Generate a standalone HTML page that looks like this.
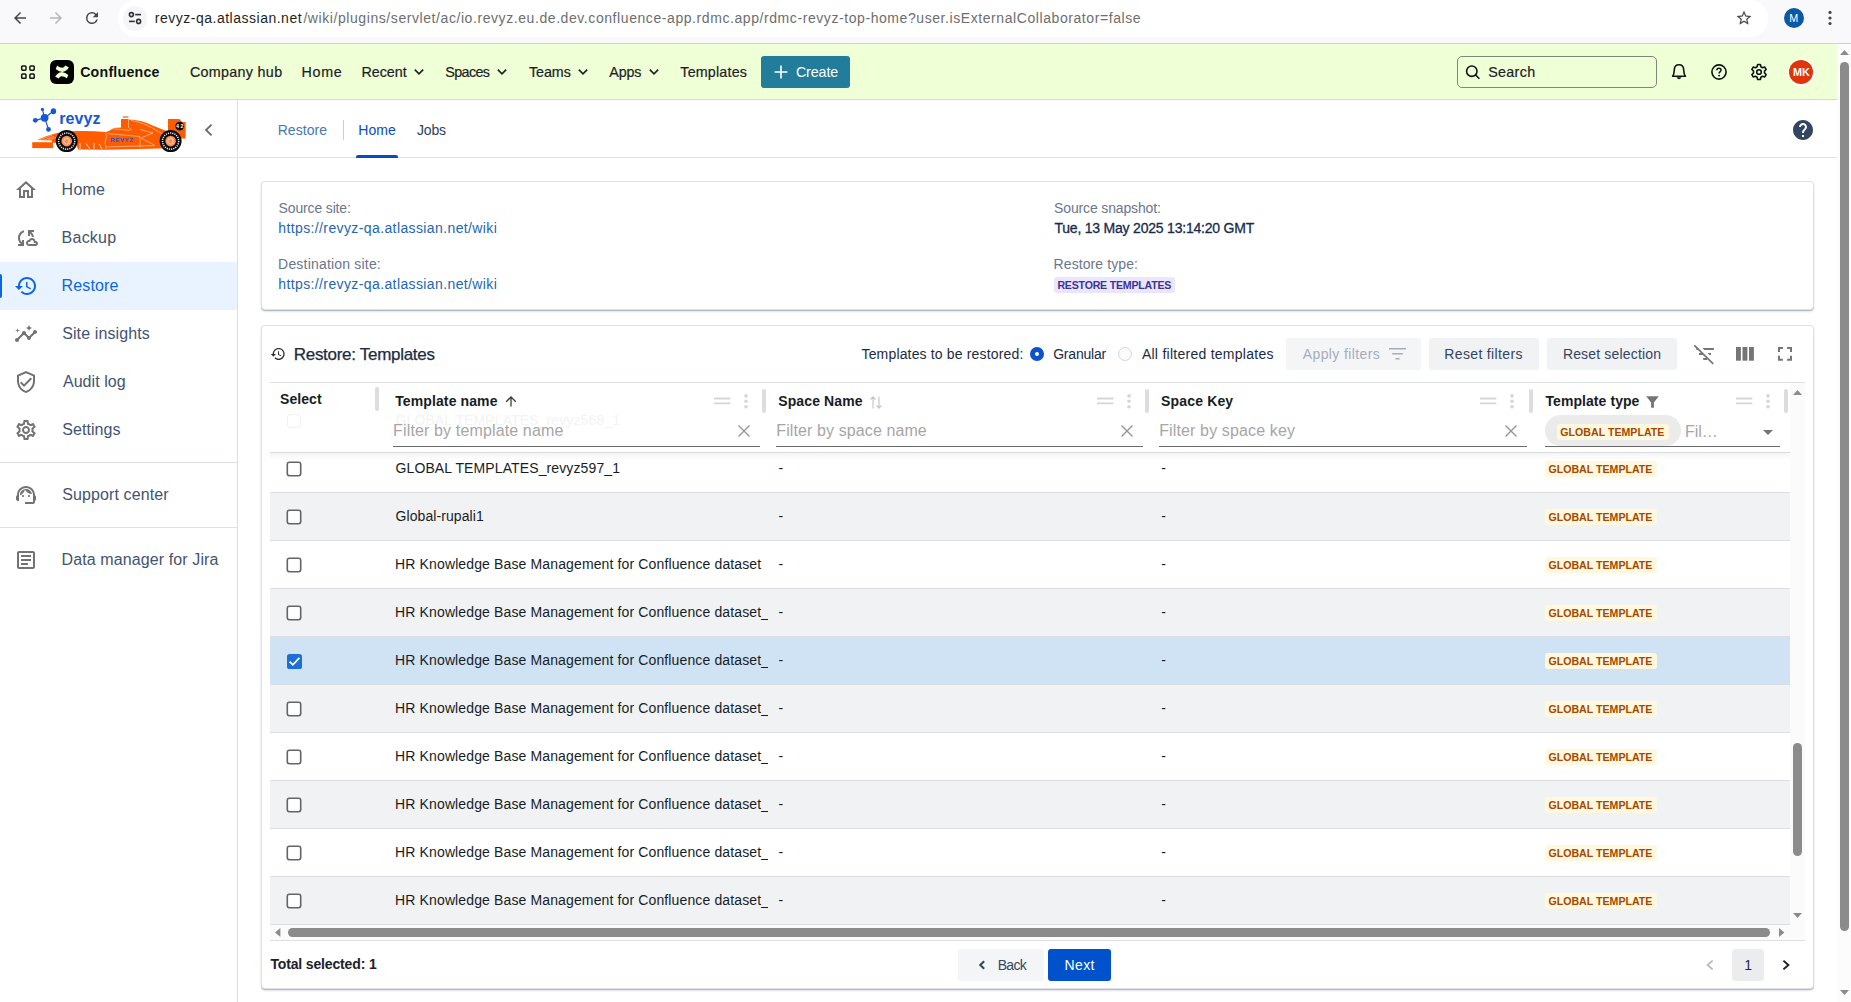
<!DOCTYPE html>
<html lang="en">
<head>
<meta charset="utf-8">
<title>Restore: Templates</title>
<style>
*{box-sizing:border-box;margin:0;padding:0}
html,body{width:1851px;height:1002px;overflow:hidden;background:#fff}
body{font-family:"Liberation Sans",sans-serif;color:#172b4d;position:relative}
.a{position:absolute}
.t{position:absolute;white-space:pre;line-height:1}
svg{position:absolute;overflow:visible}
.row{position:absolute;left:270px;width:1520px;height:48px;border-bottom:1px solid #dcdee2}
.alt{background:#f1f2f4}
.sel{background:#d0e3f5}
.cb{position:absolute;left:286.5px;width:15px;height:15px;border:1.6px solid #676767;border-radius:3px;background:#fff}
.lz{position:absolute;left:1545px;width:112px;height:16px;border-radius:3px;background:#fff8df}
.sep{position:absolute;width:4px;height:24px;top:389px;border-radius:2px;background:#dddddd}
.ul{position:absolute;top:446px;height:1px;background:#6b6b6b}
.btn{position:absolute;top:338px;height:32px;border-radius:3px;background:#f1f2f4}
</style>
</head>
<body>
<div class="a" style="left:0;top:0;width:1851px;height:43px;background:#f9f9fb"></div><div class="a" style="left:0;top:43px;width:1851px;height:1px;background:#cfd0d2"></div><div class="a" style="left:118px;top:0;width:1650px;height:36.5px;border-radius:18px;background:#fff"></div><div class="a" style="left:123px;top:6px;width:24px;height:25px;border-radius:12.5px;background:#f5f5f7"></div><svg style="left:11px;top:9.2px" width="18" height="18" viewBox="0 0 24 24"><path fill="#454746" d="M20 11H7.83l5.59-5.59L12 4l-8 8 8 8 1.41-1.41L7.83 13H20v-2z"/></svg><svg style="left:47px;top:9.2px" width="18" height="18" viewBox="0 0 24 24"><path fill="#b4b5b7" d="M12 4l-1.41 1.41L16.17 11H4v2h12.17l-5.58 5.59L12 20l8-8z"/></svg><svg style="left:83px;top:8.8px" width="18" height="18" viewBox="0 0 24 24"><path fill="#454746" d="M17.65 6.35A7.96 7.96 0 0 0 12 4a8 8 0 1 0 7.73 10h-2.08A6 6 0 1 1 12 6c1.66 0 3.14.69 4.22 1.78L13 11h7V4l-2.35 2.35z"/></svg><svg style="left:128px;top:11px" width="14" height="14" viewBox="0 0 14 14"><g fill="none" stroke="#303133" stroke-width="1.6"><circle cx="3.4" cy="3.6" r="2"/><path d="M7.2 3.6H13"/><circle cx="10.6" cy="10.4" r="2"/><path d="M1 10.4H6.8"/></g></svg><div class="t" style="left:154.79px;top:11px;font-size:14px;color:#1f1f1f;letter-spacing:0.506px;">revyz-qa.atlassian.net</div><div class="t" style="left:303.40px;top:11px;font-size:14px;color:#6d6e70;letter-spacing:0.575px;">/wiki/plugins/servlet/ac/io.revyz.eu.de.dev.confluence-app.rdmc.app/rdmc-revyz-top-home?user.isExternalCollaborator=false</div><svg style="left:1735px;top:9px" width="18" height="18" viewBox="0 0 24 24"><path fill="#454746" d="M22 9.24l-7.19-.62L12 2 9.19 8.63 2 9.24l5.46 4.73L5.82 21 12 17.27 18.18 21l-1.63-7.03L22 9.24zM12 15.4l-3.76 2.27 1-4.28-3.32-2.88 4.38-.38L12 6.1l1.71 4.04 4.38.38-3.32 2.88 1 4.28L12 15.4z"/></svg><div class="a" style="left:1783.8px;top:7.8px;width:20.2px;height:20.2px;border-radius:50%;background:#0b57a8"></div><div class="t" style="left:1789.34px;top:13px;font-size:10.8px;color:#fff;">M</div><svg style="left:1828px;top:10px" width="4" height="16" viewBox="0 0 4 16"><g fill="#454746"><circle cx="2" cy="2.4" r="1.6"/><circle cx="2" cy="8" r="1.6"/><circle cx="2" cy="13.5" r="1.6"/></g></svg><div class="a" style="left:0;top:44px;width:1837px;height:55px;background:#efffd6"></div><div class="a" style="left:0;top:99px;width:1837px;height:1px;background:#d3dcc8"></div><svg style="left:20px;top:64px" width="16" height="16" viewBox="0 0 16 16"><g fill="none" stroke="#101214" stroke-width="1.5"><rect x="1.7" y="1.9" width="4.3" height="4.3" rx="0.9"/><rect x="9.9" y="1.9" width="4.3" height="4.3" rx="0.9"/><rect x="1.7" y="10" width="4.3" height="4.3" rx="0.9"/><rect x="9.9" y="10" width="4.3" height="4.3" rx="0.9"/></g></svg><svg style="left:50px;top:60px" width="24" height="24" viewBox="0 0 24 24"><rect width="24" height="24" rx="6" fill="#000"/><path fill="#efffd6" d="M5.7 9.1L7.1 5.8Q10.2 7.9 12.7 7.7Q14.2 7.4 15.4 5.6L18.9 7.4Q16.6 11.2 12.1 12.0Q8.6 11.6 5.7 9.1Z"/><path fill="#efffd6" d="M18.3 14.9L16.9 18.2Q13.8 16.1 11.3 16.3Q9.8 16.6 8.6 18.4L5.1 16.6Q7.4 12.8 11.9 12.0Q15.4 12.4 18.3 14.9Z"/></svg><div class="t" style="left:80.13px;top:65px;font-size:14.2px;color:#101214;font-weight:700;letter-spacing:0.227px;">Confluence</div><div class="t" style="left:189.88px;top:65px;font-size:14.3px;color:#1d2125;letter-spacing:0.319px;-webkit-text-stroke:0.2px #1d2125;">Company hub</div><div class="t" style="left:301.46px;top:65px;font-size:14.3px;color:#1d2125;letter-spacing:0.704px;-webkit-text-stroke:0.2px #1d2125;">Home</div><div class="t" style="left:361.46px;top:65px;font-size:14.3px;color:#1d2125;letter-spacing:-0.029px;-webkit-text-stroke:0.2px #1d2125;">Recent</div><div class="t" style="left:445.26px;top:65px;font-size:14.3px;color:#1d2125;letter-spacing:-0.587px;-webkit-text-stroke:0.2px #1d2125;">Spaces</div><div class="t" style="left:528.91px;top:65px;font-size:14.3px;color:#1d2125;letter-spacing:-0.054px;-webkit-text-stroke:0.2px #1d2125;">Teams</div><div class="t" style="left:609.30px;top:65px;font-size:14.3px;color:#1d2125;letter-spacing:-0.167px;-webkit-text-stroke:0.2px #1d2125;">Apps</div><div class="t" style="left:680.31px;top:65px;font-size:14.3px;color:#1d2125;letter-spacing:0.185px;-webkit-text-stroke:0.2px #1d2125;">Templates</div><svg style="left:414.3px;top:68px" width="10" height="8" viewBox="0 0 10 8"><path d="M0.8 1.6L5 5.8L9.2 1.6" fill="none" stroke="#1d2125" stroke-width="1.6"/></svg><svg style="left:497.2px;top:68px" width="10" height="8" viewBox="0 0 10 8"><path d="M0.8 1.6L5 5.8L9.2 1.6" fill="none" stroke="#1d2125" stroke-width="1.6"/></svg><svg style="left:578.2px;top:68px" width="10" height="8" viewBox="0 0 10 8"><path d="M0.8 1.6L5 5.8L9.2 1.6" fill="none" stroke="#1d2125" stroke-width="1.6"/></svg><svg style="left:649px;top:68px" width="10" height="8" viewBox="0 0 10 8"><path d="M0.8 1.6L5 5.8L9.2 1.6" fill="none" stroke="#1d2125" stroke-width="1.6"/></svg><div class="a" style="left:761px;top:56px;width:89px;height:32px;border-radius:3px;background:#227d9b"></div><svg style="left:774px;top:65px" width="14" height="14" viewBox="0 0 14 14"><path d="M7 0.6V13.4M0.6 7H13.4" stroke="#fff" stroke-width="1.6" fill="none"/></svg><div class="t" style="left:795.88px;top:65px;font-size:14.3px;color:#fff;letter-spacing:-0.103px;">Create</div><div class="a" style="left:1457px;top:56px;width:200px;height:32px;border-radius:5px;border:1px solid #7f8877"></div><svg style="left:1464px;top:63px" width="18" height="18" viewBox="0 0 18 18"><g fill="none" stroke="#101214" stroke-width="1.6"><circle cx="7.8" cy="8.2" r="5.2"/><path d="M11.6 12L15.4 15.8"/></g></svg><div class="t" style="left:1488.16px;top:65px;font-size:14.3px;color:#1d2125;letter-spacing:0.328px;-webkit-text-stroke:0.2px #1d2125;">Search</div><svg style="left:1671px;top:63px" width="16" height="18" viewBox="0 0 16 18"><path d="M1.6 13.3C3.3 11.4 3.2 9.4 3.3 6.6C3.4 3.6 5.3 1.7 8 1.7C10.7 1.7 12.6 3.6 12.7 6.6C12.8 9.4 12.7 11.4 14.4 13.3Z" fill="none" stroke="#101214" stroke-width="1.6" stroke-linejoin="round"/><path d="M5.5 14.3Q8 18.2 10.5 14.3Z" fill="#101214"/></svg><svg style="left:1710px;top:63px" width="18" height="18" viewBox="0 0 18 18"><circle cx="9" cy="9" r="7.1" fill="none" stroke="#101214" stroke-width="1.6"/><path d="M6.9 7.3C6.9 5.9 7.9 5.2 9 5.2C10.2 5.2 11.1 6 11.1 7.1C11.1 8.6 9.1 8.7 9.1 10.4" fill="none" stroke="#101214" stroke-width="1.5"/><circle cx="9.1" cy="12.6" r="0.95" fill="#101214"/></svg><svg style="left:1750px;top:63px" width="18" height="18" viewBox="0 0 18 18"><path d="M7.65 1.52L10.35 1.52L10.90 3.73L12.61 4.72L14.80 4.09L16.15 6.43L14.51 8.01L14.51 9.99L16.15 11.57L14.80 13.91L12.61 13.28L10.90 14.27L10.35 16.48L7.65 16.48L7.10 14.27L5.39 13.28L3.20 13.91L1.85 11.57L3.49 9.99L3.49 8.01L1.85 6.43L3.20 4.09L5.39 4.72L7.10 3.73Z" fill="none" stroke="#101214" stroke-width="1.6" stroke-linejoin="round"/><circle cx="9" cy="9" r="2.3" fill="none" stroke="#101214" stroke-width="1.6"/></svg><div class="a" style="left:1787.5px;top:58.5px;width:27px;height:27px;border-radius:50%;background:#fff"></div><div class="a" style="left:1789px;top:60px;width:24px;height:24px;border-radius:50%;background:#de350b"></div><div class="t" style="left:1792.59px;top:67px;font-size:10.7px;color:#fff;font-weight:700;transform:scaleX(1.0143);transform-origin:0 0;">MK</div><div class="a" style="left:1837px;top:44px;width:14px;height:958px;background:#fcfcfc"></div><svg style="left:1840px;top:50px" width="9" height="5" viewBox="0 0 9 5"><path d="M0 5L4.5 0L9 5Z" fill="#8b8b8b"/></svg><div class="a" style="left:1840.3px;top:62px;width:8.7px;height:868.5px;border-radius:4.4px;background:#8b8b8b"></div><svg style="left:1840px;top:990px" width="9" height="5" viewBox="0 0 9 5"><path d="M0 0L4.5 5L9 0Z" fill="#8b8b8b"/></svg><div class="a" style="left:237px;top:100px;width:1px;height:902px;background:#dcdfe4"></div><div class="a" style="left:0;top:157px;width:1837px;height:1px;background:#e1e3e8"></div><svg style="left:28px;top:104px" width="164" height="52" viewBox="28 104 164 52">
<g stroke="#1558d6" stroke-width="1.2"><path d="M44.6 117.8L53.4 111.3M44.6 117.8L42.4 109.4M44.6 117.8L35.3 120.3M44.6 117.8L48.5 129.4"/></g>
<g fill="#1558d6"><circle cx="44.6" cy="117.8" r="3.9"/><ellipse cx="53.4" cy="111.3" rx="2.7" ry="3"/><circle cx="42.4" cy="109.4" r="1.6"/><circle cx="35.3" cy="120.3" r="2.4"/><circle cx="48.5" cy="129.4" r="2.4"/></g>
<g fill="#ff5c00">
<rect x="32.2" y="142.2" width="20.8" height="5.9"/>
<path d="M37.3 140L46 136.2Q57 132.2 68 131.3Q88 130.2 105.8 132L109 131L113.6 128.1L121 127.5V119H128.3V119.6Q141 119.8 152 125.3L163.8 130L168 131.5V119H179.4L182 121.9H185.6V138.5H180L178 146.5L160 148.6L106 149.7L78 149.5L76 142.8H52V140.5Z"/>
<rect x="122.8" y="116.2" width="5.7" height="1.7" fill="#ff8a4a"/>
</g>
<g fill="none" stroke="#ffe3d3" stroke-width="0.55"><path d="M105.5 132.5L106.5 137L105 142L106 149"/><path d="M128.5 119.8V127.5L132 130"/><path d="M131 120.5Q146 123 158 131.5L164 134.5"/><path d="M107 133.5L140 136.5V147.5"/><path d="M140 129.5L153 133L141 138L155 145.5L106 147"/><path d="M112 128.6L130 130.5"/><path d="M38 140.5L52 135M41 141L54 136.5M45 141.2L56 137.3" stroke-width="0.45"/><path d="M80 143V149M86 143.5L90 149M94 143V149M99 144L102 149" stroke="#fff" stroke-width="0.7"/></g>
<g><circle cx="66.7" cy="141.1" r="11" fill="#0b0b0b"/><circle cx="66.7" cy="141.1" r="8.1" fill="none" stroke="#ededed" stroke-width="1.5" stroke-dasharray="1.2 1"/><circle cx="66.7" cy="141.1" r="5.3" fill="#ff8d52"/><circle cx="66.7" cy="141.1" r="2.8" fill="none" stroke="#ffe1d0" stroke-width="1.6" stroke-dasharray="0.9 0.8"/></g>
<g><circle cx="170.6" cy="141.1" r="11" fill="#0b0b0b"/><circle cx="170.6" cy="141.1" r="8.1" fill="none" stroke="#ededed" stroke-width="1.5" stroke-dasharray="1.2 1"/><circle cx="170.6" cy="141.1" r="5.3" fill="#ff8d52"/><circle cx="170.6" cy="141.1" r="2.8" fill="none" stroke="#ffe1d0" stroke-width="1.6" stroke-dasharray="0.9 0.8"/></g>
<circle cx="179.7" cy="126.1" r="4.4" fill="#0b0b0b"/>
</svg><div class="t" style="left:59.26px;top:111px;font-size:16px;color:#1558d6;font-weight:700;letter-spacing:0.060px;">revyz</div><div class="t" style="left:110.30px;top:137px;font-size:6.2px;color:#1a56c9;font-weight:700;letter-spacing:0.503px;">REVYZ</div><div class="t" style="left:176.02px;top:124px;font-size:5.4px;color:#fff;font-weight:700;letter-spacing:1.583px;">42</div><svg style="left:204px;top:123px" width="9" height="14" viewBox="0 0 9 14"><path d="M7.6 1.6L2 7L7.6 12.4" fill="none" stroke="#6b6e76" stroke-width="1.9"/></svg><div class="t" style="left:277.68px;top:123px;font-size:14px;color:#4679b6;letter-spacing:0.045px;">Restore</div><div class="a" style="left:343px;top:120px;width:1px;height:20px;background:#c9ced6"></div><div class="t" style="left:358.18px;top:123px;font-size:14px;color:#0b4bc0;letter-spacing:0.119px;">Home</div><div class="a" style="left:356px;top:155px;width:42px;height:3px;border-radius:2px 2px 0 0;background:#0a4bc4"></div><div class="t" style="left:416.99px;top:123px;font-size:14px;color:#2c3e5d;letter-spacing:-0.148px;">Jobs</div><svg style="left:1791px;top:118px" width="24" height="24" viewBox="0 0 24 24"><path fill="#344563" d="M12 2C6.48 2 2 6.48 2 12s4.48 10 10 10 10-4.48 10-10S17.52 2 12 2zm1 17h-2v-2h2v2zm2.07-7.75l-.9.92C13.45 12.9 13 13.5 13 15h-2v-.5c0-1.1.45-2.1 1.17-2.83l1.24-1.26c.37-.36.59-.86.59-1.41 0-1.1-.9-2-2-2s-2 .9-2 2H8c0-2.21 1.79-4 4-4s4 1.79 4 4c0 .88-.36 1.68-.93 2.25z"/></svg><div class="a" style="left:0;top:262px;width:237px;height:48px;background:#e9f2ff"></div><div class="a" style="left:0;top:274px;width:2px;height:24px;border-radius:0 2px 2px 0;background:#0c66e4"></div><div class="t" style="left:61.62px;top:182px;font-size:16px;color:#44546f;letter-spacing:0.225px;">Home</div><div class="t" style="left:61.62px;top:230px;font-size:16px;color:#44546f;letter-spacing:0.231px;">Backup</div><div class="t" style="left:61.62px;top:278px;font-size:16px;color:#0c66e4;letter-spacing:0.136px;">Restore</div><div class="t" style="left:62.18px;top:326px;font-size:16px;color:#44546f;letter-spacing:0.112px;">Site insights</div><div class="t" style="left:62.90px;top:374px;font-size:16px;color:#44546f;letter-spacing:0.065px;">Audit log</div><div class="t" style="left:62.18px;top:422px;font-size:16px;color:#44546f;letter-spacing:0.077px;">Settings</div><div class="t" style="left:62.18px;top:487px;font-size:16px;color:#44546f;letter-spacing:0.116px;">Support center</div><div class="t" style="left:61.62px;top:552px;font-size:16px;color:#44546f;letter-spacing:0.104px;">Data manager for Jira</div><div class="a" style="left:0;top:462px;width:237px;height:1px;background:#dcdfe4"></div><div class="a" style="left:0;top:527px;width:237px;height:1px;background:#dcdfe4"></div><svg style="left:14px;top:178px" width="24" height="24" viewBox="0 0 24 24"><path fill="#727272" d="M12 5.69l5 4.5V18h-2v-6H9v6H7v-7.81l5-4.5M12 3L2 12h3v8h6v-6h2v6h6v-8h3L12 3z"/></svg><svg style="left:14px;top:226px" width="24" height="24" viewBox="0 0 24 24"><path fill="#727272" d="M21.5 14.98c-.02 0-.03 0-.05.01C21.2 13.3 19.76 12 18 12c-1.4 0-2.6.83-3.16 2.02C13.26 14.1 12 15.4 12 17c0 1.66 1.34 3 3 3l6.5-.02c1.38 0 2.5-1.12 2.5-2.5s-1.12-2.500-2.5-2.500zM21.51 17.98L15 18c-.55 0-1-.45-1-1s.45-1 1-1h1.250v-.25c0-.97.78-1.75 1.750-1.750s1.750.78 1.750 1.750V17h1.760c.28 0 .5.22.5.5 0 .27-.22.48-.49.48zM10 4.260v2.090C7.670 7.180 6 9.390 6 12c0 1.770.78 3.340 2 4.440V14h2v6H4v-2h2.730C5.060 16.540 4 14.400 4 12c0-3.730 2.550-6.850 6-7.740zM20 6h-2.730c1.430 1.260 2.410 3.010 2.660 5h-2.020c-.23-1.360-.93-2.550-1.910-3.440V10h-2V4h6v2z"/></svg><svg style="left:14px;top:274px" width="24" height="24" viewBox="0 0 24 24"><path fill="#0c66e4" d="M13 3c-4.97 0-9 4.03-9 9H1l3.890 3.890.07.14L9 12H6c0-3.870 3.130-7 7-7s7 3.130 7 7-3.130 7-7 7c-1.930 0-3.680-.79-4.940-2.060l-1.420 1.420C8.270 19.990 10.510 21 13 21c4.970 0 9-4.030 9-9s-4.030-9-9-9zm-1 5v5l4.280 2.540.72-1.210-3.500-2.080V8H12z"/></svg><svg style="left:14px;top:322px" width="24" height="24" viewBox="0 0 24 24"><path fill="#727272" d="M21 8c-1.450 0-2.260 1.440-1.930 2.510l-3.550 3.560c-.3-.09-.74-.09-1.040 0l-2.550-2.550C12.270 10.450 11.460 9 10 9c-1.450 0-2.270 1.440-1.930 2.520l-4.560 4.550C2.440 15.740 1 16.550 1 18c0 1.100.9 2 2 2 1.450 0 2.260-1.440 1.930-2.510l4.550-4.560c.3.09.74.09 1.040 0l2.550 2.550C12.730 16.550 13.540 18 15 18c1.450 0 2.270-1.440 1.930-2.520l3.560-3.550c1.070.33 2.510-.48 2.510-1.930 0-1.100-.9-2-2-2zM15 9l.94-2.070L18 6l-2.060-.93L15 3l-.92 2.070L12 6l2.080.93zM3.500 11L4 9l2-.5L4 8l-.5-2L3 8l-2 .5L3 9z"/></svg><svg style="left:14px;top:370px" width="24" height="24" viewBox="0 0 24 24"><path fill="#727272" d="M12 1L3 5v6c0 5.550 3.840 10.740 9 12 5.160-1.260 9-6.450 9-12V5l-9-4zm7 10c0 4.520-2.980 8.690-7 9.930-4.020-1.240-7-5.410-7-9.930V6.300l7-3.110 7 3.110V11zm-11.590.59L6 13l4 4 8-8-1.410-1.420L10 14.170z"/></svg><svg style="left:14px;top:418px" width="24" height="24" viewBox="0 0 24 24"><path fill="#727272" d="M19.430 12.980c.04-.32.07-.64.07-.98 0-.34-.03-.66-.07-.98l2.110-1.650c.19-.15.24-.42.12-.64l-2-3.460c-.09-.16-.26-.25-.44-.25-.06 0-.12.010-.17.030l-2.490 1c-.52-.4-1.080-.73-1.690-.98l-.38-2.650C14.460 2.180 14.250 2 14 2h-4c-.25 0-.46.180-.49.420l-.38 2.650c-.61.250-1.170.59-1.690.98l-2.490-1c-.06-.02-.12-.03-.18-.03-.17 0-.34.09-.43.250l-2 3.460c-.13.220-.07.49.12.640l2.110 1.650c-.04.320-.07.650-.07.980 0 .33.030.66.070.98l-2.110 1.650c-.19.150-.24.420-.12.640l2 3.460c.09.160.26.250.44.250.06 0 .12-.01.17-.03l2.490-1c.52.4 1.080.73 1.690.98l.38 2.650c.03.240.24.420.49.420h4c.25 0 .46-.18.490-.42l.38-2.650c.61-.25 1.170-.59 1.690-.98l2.490 1c.06.020.12.030.18.030.17 0 .34-.09.43-.25l2-3.460c.12-.22.070-.49-.12-.64l-2.110-1.650zm-1.980-1.710c.04.310.05.520.05.730 0 .210-.02.430-.05.730l-.14 1.130.89.700 1.080.84-.7 1.210-1.270-.51-1.040-.42-.9.680c-.43.320-.84.560-1.250.73l-1.060.43-.16 1.130-.2 1.350h-1.400l-.19-1.350-.16-1.130-1.060-.43c-.43-.18-.83-.41-1.230-.71l-.91-.7-1.060.43-1.270.51-.7-1.210 1.080-.84.89-.7-.14-1.130c-.03-.31-.05-.54-.05-.74s.02-.43.050-.73l.14-1.130-.89-.7-1.080-.84.7-1.210 1.270.51 1.040.42.900-.68c.43-.32.840-.56 1.250-.73l1.060-.43.160-1.130.2-1.350h1.390l.19 1.350.16 1.130 1.060.43c.43.180.83.410 1.230.710l.91.700 1.060-.43 1.270-.51.7 1.210-1.070.85-.89.700.14 1.130zM12 8c-2.210 0-4 1.790-4 4s1.790 4 4 4 4-1.790 4-4-1.790-4-4-4zm0 6c-1.100 0-2-.9-2-2s.9-2 2-2 2 .9 2 2-.9 2-2 2z"/></svg><svg style="left:14px;top:483px" width="24" height="24" viewBox="0 0 24 24"><path fill="#727272" d="M21 12.220C21 6.730 16.740 3 12 3c-4.690 0-9 3.650-9 9.280-.6.340-1 .98-1 1.720v2c0 1.100.9 2 2 2h1v-6.100c0-3.870 3.130-7 7-7s7 3.130 7 7V19h-8v2h8c1.100 0 2-.9 2-2v-1.220c.59-.31 1-.92 1-1.640v-2.300c0-.7-.41-1.310-1-1.620zM9 14c.55 0 1-.45 1-1s-.45-1-1-1-1 .45-1 1 .45 1 1 1zM15 14c.55 0 1-.45 1-1s-.45-1-1-1-1 .45-1 1 .45 1 1 1zM18 11.030C17.520 8.180 15.040 6 12.050 6c-3.030 0-6.290 2.510-6.030 6.450 2.470-1.010 4.330-3.210 4.860-5.890 1.310 2.630 4 4.440 7.120 4.470z"/></svg><svg style="left:14px;top:548px" width="24" height="24" viewBox="0 0 24 24"><path fill="#727272" d="M19 5v14H5V5h14m0-2H5c-1.100 0-2 .9-2 2v14c0 1.100.9 2 2 2h14c1.100 0 2-.9 2-2V5c0-1.100-.9-2-2-2zM14 17H7v-2h7v2zm3-4H7v-2h10v2zm0-4H7V7h10v2z"/></svg><div class="a" style="left:261px;top:181px;width:1553px;height:129px;background:#fff;border:1px solid #dfe1e6;border-radius:4px;box-shadow:0 1px 1px rgba(9,30,66,.22),0 2px 3px -1px rgba(9,30,66,.2)"></div><div class="t" style="left:278.57px;top:201px;font-size:14px;color:#6b778c;letter-spacing:-0.147px;">Source site:</div><div class="t" style="left:278.22px;top:221px;font-size:14px;color:#2466b4;letter-spacing:0.389px;">https://revyz-qa.atlassian.net/wiki</div><div class="t" style="left:278.08px;top:257px;font-size:14px;color:#6b778c;letter-spacing:0.192px;">Destination site:</div><div class="t" style="left:278.22px;top:277px;font-size:14px;color:#2466b4;letter-spacing:0.389px;">https://revyz-qa.atlassian.net/wiki</div><div class="t" style="left:1054.07px;top:201px;font-size:14px;color:#6b778c;letter-spacing:-0.141px;">Source snapshot:</div><div class="t" style="left:1054.42px;top:221px;font-size:14px;color:#172b4d;letter-spacing:-0.210px;-webkit-text-stroke:0.3px #172b4d;">Tue, 13 May 2025 13:14:20 GMT</div><div class="t" style="left:1053.58px;top:257px;font-size:14px;color:#6b778c;letter-spacing:0.090px;">Restore type:</div><div class="a" style="left:1054px;top:277px;width:121px;height:16px;border-radius:3px;background:#eae6ff"></div><div class="t" style="left:1057.41px;top:280px;font-size:10.6px;color:#403294;font-weight:700;letter-spacing:-0.210px;">RESTORE TEMPLATES</div><div class="a" style="left:261px;top:325px;width:1553px;height:664px;background:#fff;border:1px solid #dfe1e6;border-radius:4px;box-shadow:0 1px 1px rgba(9,30,66,.22),0 2px 3px -1px rgba(9,30,66,.2)"></div><svg style="left:270px;top:346px" width="16" height="16" viewBox="0 0 24 24"><path fill="#2b2f36" d="M13 3c-4.97 0-9 4.03-9 9H1l3.890 3.890.07.14L9 12H6c0-3.870 3.130-7 7-7s7 3.130 7 7-3.130 7-7 7c-1.930 0-3.680-.79-4.940-2.060l-1.420 1.420C8.270 19.990 10.510 21 13 21c4.970 0 9-4.030 9-9s-4.030-9-9-9zm-1 5v5l4.280 2.540.72-1.210-3.500-2.080V8H12z"/></svg><div class="t" style="left:293.74px;top:346px;font-size:17px;color:#1c2b41;letter-spacing:-0.292px;-webkit-text-stroke:0.25px #1c2b41;">Restore: Templates</div><div class="t" style="left:861.52px;top:347px;font-size:14px;color:#1c2b41;letter-spacing:0.160px;">Templates to be restored:</div><div class="a" style="left:1030px;top:347px;width:14px;height:14px;border-radius:50%;background:#0c52cc"></div><div class="a" style="left:1035px;top:352px;width:4px;height:4px;border-radius:50%;background:#fff"></div><div class="t" style="left:1053.20px;top:347px;font-size:14px;color:#1c2b41;letter-spacing:-0.203px;">Granular</div><div class="a" style="left:1118px;top:347px;width:14px;height:14px;border-radius:50%;background:#fafbfc;border:1.5px solid #d3d6dc"></div><div class="t" style="left:1141.90px;top:347px;font-size:14px;color:#1c2b41;letter-spacing:0.263px;">All filtered templates</div><div class="btn" style="left:1286px;width:135px;background:#f4f5f7"></div><div class="t" style="left:1302.80px;top:347px;font-size:14px;color:#a5adba;letter-spacing:0.384px;">Apply filters</div><svg style="left:1389px;top:348px" width="17" height="12" viewBox="0 0 17 12"><path d="M0 0.8H17M3.2 5.8H13.8M6.5 10.8H10.5" stroke="#a5adba" stroke-width="1.4" fill="none"/></svg><div class="btn" style="left:1429px;width:110px"></div><div class="t" style="left:1444.28px;top:347px;font-size:14px;color:#344563;letter-spacing:0.357px;">Reset filters</div><div class="btn" style="left:1547px;width:130px"></div><div class="t" style="left:1562.88px;top:347px;font-size:14px;color:#344563;letter-spacing:0.169px;">Reset selection</div><svg style="left:1693px;top:344px" width="23" height="21" viewBox="1693 344 23 21"><g fill="none" stroke="#757575" stroke-width="2"><path d="M1696.3 348.9H1713.9M1699 353.9H1711M1703.2 358.9H1707"/></g><path d="M1695.6 344.2L1714.4 362.7" stroke="#fff" stroke-width="4.2" fill="none"/><path d="M1694.4 345.4L1713.2 363.9" stroke="#757575" stroke-width="1.7" fill="none"/></svg><svg style="left:1736.1px;top:347.1px" width="18" height="13.7" viewBox="0 0 18 13.7"><g fill="#757575"><rect x="0" y="0" width="4.9" height="13.7"/><rect x="6.5" y="0" width="4.9" height="13.7"/><rect x="13" y="0" width="4.9" height="13.7"/></g></svg><svg style="left:1778px;top:347.1px" width="14" height="13.7" viewBox="0 0 14 13.7"><path d="M1 4.9V1H4.9M9.1 1H13V4.9M13 8.8V12.7H9.1M4.9 12.7H1V8.8" fill="none" stroke="#757575" stroke-width="2"/></svg><div class="a" style="left:270px;top:383px;width:1520px;height:542px;overflow:hidden"></div><div class="row" style="top:445px"></div><svg style="left:286px;top:461px" width="16" height="16" viewBox="0 0 16 16"><rect x="1.3" y="1.3" width="13.4" height="13.4" rx="2.1" fill="#fff" stroke="#646464" stroke-width="1.6"/></svg><div class="t" style="left:395.50px;top:461px;font-size:14px;color:#181d1f;letter-spacing:0.114px;">GLOBAL TEMPLATES_revyz597_1</div><div class="t" style="left:778.47px;top:461px;font-size:14px;color:#181d1f;">-</div><div class="t" style="left:1161.37px;top:461px;font-size:14px;color:#181d1f;">-</div><div class="lz" style="top:461px"></div><div class="t" style="left:1548.48px;top:464px;font-size:10.6px;color:#a54800;font-weight:700;letter-spacing:0.009px;">GLOBAL TEMPLATE</div><div class="row alt" style="top:493px"></div><svg style="left:286px;top:509px" width="16" height="16" viewBox="0 0 16 16"><rect x="1.3" y="1.3" width="13.4" height="13.4" rx="2.1" fill="#fff" stroke="#646464" stroke-width="1.6"/></svg><div class="t" style="left:395.50px;top:509px;font-size:14px;color:#181d1f;letter-spacing:0.082px;">Global-rupali1</div><div class="t" style="left:778.47px;top:509px;font-size:14px;color:#181d1f;">-</div><div class="t" style="left:1161.37px;top:509px;font-size:14px;color:#181d1f;">-</div><div class="lz" style="top:509px"></div><div class="t" style="left:1548.48px;top:512px;font-size:10.6px;color:#a54800;font-weight:700;letter-spacing:0.009px;">GLOBAL TEMPLATE</div><div class="row" style="top:541px"></div><svg style="left:286px;top:557px" width="16" height="16" viewBox="0 0 16 16"><rect x="1.3" y="1.3" width="13.4" height="13.4" rx="2.1" fill="#fff" stroke="#646464" stroke-width="1.6"/></svg><div class="t" style="left:395.08px;top:557px;font-size:14px;color:#181d1f;letter-spacing:0.131px;">HR Knowledge Base Management for Confluence dataset</div><div class="t" style="left:778.47px;top:557px;font-size:14px;color:#181d1f;">-</div><div class="t" style="left:1161.37px;top:557px;font-size:14px;color:#181d1f;">-</div><div class="lz" style="top:557px"></div><div class="t" style="left:1548.48px;top:560px;font-size:10.6px;color:#a54800;font-weight:700;letter-spacing:0.009px;">GLOBAL TEMPLATE</div><div class="row alt" style="top:589px"></div><svg style="left:286px;top:605px" width="16" height="16" viewBox="0 0 16 16"><rect x="1.3" y="1.3" width="13.4" height="13.4" rx="2.1" fill="#fff" stroke="#646464" stroke-width="1.6"/></svg><div class="t" style="left:395.08px;top:605px;font-size:14px;color:#181d1f;letter-spacing:0.130px;width:372.9px;overflow:hidden;padding-bottom:4px;">HR Knowledge Base Management for Confluence dataset_1</div><div class="t" style="left:778.47px;top:605px;font-size:14px;color:#181d1f;">-</div><div class="t" style="left:1161.37px;top:605px;font-size:14px;color:#181d1f;">-</div><div class="lz" style="top:605px"></div><div class="t" style="left:1548.48px;top:608px;font-size:10.6px;color:#a54800;font-weight:700;letter-spacing:0.009px;">GLOBAL TEMPLATE</div><div class="row sel" style="top:637px"></div><svg style="left:286.5px;top:653.5px" width="15" height="15" viewBox="0 0 15 15"><rect width="15" height="15" rx="2.6" fill="#1b6fd6"/><path d="M2.6 7.6L5.9 10.9L12.4 3.9" fill="none" stroke="#fff" stroke-width="1.7"/></svg><div class="t" style="left:395.08px;top:653px;font-size:14px;color:#181d1f;letter-spacing:0.130px;width:372.9px;overflow:hidden;padding-bottom:4px;">HR Knowledge Base Management for Confluence dataset_1</div><div class="t" style="left:778.47px;top:653px;font-size:14px;color:#181d1f;">-</div><div class="t" style="left:1161.37px;top:653px;font-size:14px;color:#181d1f;">-</div><div class="lz" style="top:653px"></div><div class="t" style="left:1548.48px;top:656px;font-size:10.6px;color:#a54800;font-weight:700;letter-spacing:0.009px;">GLOBAL TEMPLATE</div><div class="row alt" style="top:685px"></div><svg style="left:286px;top:701px" width="16" height="16" viewBox="0 0 16 16"><rect x="1.3" y="1.3" width="13.4" height="13.4" rx="2.1" fill="#fff" stroke="#646464" stroke-width="1.6"/></svg><div class="t" style="left:395.08px;top:701px;font-size:14px;color:#181d1f;letter-spacing:0.130px;width:372.9px;overflow:hidden;padding-bottom:4px;">HR Knowledge Base Management for Confluence dataset_1</div><div class="t" style="left:778.47px;top:701px;font-size:14px;color:#181d1f;">-</div><div class="t" style="left:1161.37px;top:701px;font-size:14px;color:#181d1f;">-</div><div class="lz" style="top:701px"></div><div class="t" style="left:1548.48px;top:704px;font-size:10.6px;color:#a54800;font-weight:700;letter-spacing:0.009px;">GLOBAL TEMPLATE</div><div class="row" style="top:733px"></div><svg style="left:286px;top:749px" width="16" height="16" viewBox="0 0 16 16"><rect x="1.3" y="1.3" width="13.4" height="13.4" rx="2.1" fill="#fff" stroke="#646464" stroke-width="1.6"/></svg><div class="t" style="left:395.08px;top:749px;font-size:14px;color:#181d1f;letter-spacing:0.130px;width:372.9px;overflow:hidden;padding-bottom:4px;">HR Knowledge Base Management for Confluence dataset_1</div><div class="t" style="left:778.47px;top:749px;font-size:14px;color:#181d1f;">-</div><div class="t" style="left:1161.37px;top:749px;font-size:14px;color:#181d1f;">-</div><div class="lz" style="top:749px"></div><div class="t" style="left:1548.48px;top:752px;font-size:10.6px;color:#a54800;font-weight:700;letter-spacing:0.009px;">GLOBAL TEMPLATE</div><div class="row alt" style="top:781px"></div><svg style="left:286px;top:797px" width="16" height="16" viewBox="0 0 16 16"><rect x="1.3" y="1.3" width="13.4" height="13.4" rx="2.1" fill="#fff" stroke="#646464" stroke-width="1.6"/></svg><div class="t" style="left:395.08px;top:797px;font-size:14px;color:#181d1f;letter-spacing:0.130px;width:372.9px;overflow:hidden;padding-bottom:4px;">HR Knowledge Base Management for Confluence dataset_1</div><div class="t" style="left:778.47px;top:797px;font-size:14px;color:#181d1f;">-</div><div class="t" style="left:1161.37px;top:797px;font-size:14px;color:#181d1f;">-</div><div class="lz" style="top:797px"></div><div class="t" style="left:1548.48px;top:800px;font-size:10.6px;color:#a54800;font-weight:700;letter-spacing:0.009px;">GLOBAL TEMPLATE</div><div class="row" style="top:829px"></div><svg style="left:286px;top:845px" width="16" height="16" viewBox="0 0 16 16"><rect x="1.3" y="1.3" width="13.4" height="13.4" rx="2.1" fill="#fff" stroke="#646464" stroke-width="1.6"/></svg><div class="t" style="left:395.08px;top:845px;font-size:14px;color:#181d1f;letter-spacing:0.130px;width:372.9px;overflow:hidden;padding-bottom:4px;">HR Knowledge Base Management for Confluence dataset_1</div><div class="t" style="left:778.47px;top:845px;font-size:14px;color:#181d1f;">-</div><div class="t" style="left:1161.37px;top:845px;font-size:14px;color:#181d1f;">-</div><div class="lz" style="top:845px"></div><div class="t" style="left:1548.48px;top:848px;font-size:10.6px;color:#a54800;font-weight:700;letter-spacing:0.009px;">GLOBAL TEMPLATE</div><div class="row alt" style="top:877px"></div><svg style="left:286px;top:893px" width="16" height="16" viewBox="0 0 16 16"><rect x="1.3" y="1.3" width="13.4" height="13.4" rx="2.1" fill="#fff" stroke="#646464" stroke-width="1.6"/></svg><div class="t" style="left:395.08px;top:893px;font-size:14px;color:#181d1f;letter-spacing:0.130px;width:372.9px;overflow:hidden;padding-bottom:4px;">HR Knowledge Base Management for Confluence dataset_1</div><div class="t" style="left:778.47px;top:893px;font-size:14px;color:#181d1f;">-</div><div class="t" style="left:1161.37px;top:893px;font-size:14px;color:#181d1f;">-</div><div class="lz" style="top:893px"></div><div class="t" style="left:1548.48px;top:896px;font-size:10.6px;color:#a54800;font-weight:700;letter-spacing:0.009px;">GLOBAL TEMPLATE</div><div class="a" style="left:270px;top:382px;width:1535px;height:1px;background:#dde0e5"></div><div class="a" style="left:270px;top:383px;width:1520px;height:69px;background:#fff"></div><div class="a" style="left:270px;top:452px;width:1520px;height:1px;background:#d9dbde"></div><div class="a" style="left:270px;top:453px;width:1520px;height:7px;background:linear-gradient(rgba(0,0,0,.045),rgba(0,0,0,0))"></div><div class="a" style="left:287px;top:414px;width:14px;height:14px;border:1.5px solid #f1f1f1;border-radius:3px"></div><div class="t" style="left:395.50px;top:413px;font-size:14px;color:#f3f3f3;letter-spacing:0.114px;">GLOBAL TEMPLATES_revyz568_1</div><div class="t" style="left:279.98px;top:392px;font-size:14px;color:#181d1f;font-weight:700;letter-spacing:0.086px;">Select</div><div class="t" style="left:395.26px;top:394px;font-size:14px;color:#181d1f;font-weight:700;letter-spacing:0.107px;">Template name</div><div class="t" style="left:778.18px;top:394px;font-size:14px;color:#181d1f;font-weight:700;letter-spacing:0.133px;">Space Name</div><div class="t" style="left:1161.08px;top:394px;font-size:14px;color:#181d1f;font-weight:700;letter-spacing:0.156px;">Space Key</div><div class="t" style="left:1545.46px;top:394px;font-size:14px;color:#181d1f;font-weight:700;letter-spacing:0.071px;">Template type</div><div class="sep" style="left:375.3px;top:387px"></div><div class="sep" style="left:762.2px"></div><div class="sep" style="left:1145.2px"></div><div class="sep" style="left:1529.1px"></div><div class="sep" style="left:1784px"></div><svg style="left:505px;top:396px" width="12" height="11" viewBox="0 0 12 11"><path d="M6 10.6V1.2M1.2 5.8L6 1L10.8 5.8" fill="none" stroke="#3c3c3c" stroke-width="1.3"/></svg><svg style="left:869.9px;top:395.5px" width="12" height="13" viewBox="0 0 12 13"><path d="M3 12.4V1M0.4 3.6L3 0.9L5.6 3.6M9 0.6V12M6.4 9.4L9 12.1L11.6 9.4" fill="none" stroke="#c4c4c4" stroke-width="1.1"/></svg><svg style="left:1646px;top:396px" width="13" height="12" viewBox="0 0 13 12"><path d="M0.2 0.3H12.8L7.9 6.4V11.8H5.1V6.4Z" fill="#757575"/></svg><svg style="left:714px;top:394px" width="40" height="15" viewBox="0 0 40 15"><path d="M0 4.5H16.4M0 9.3H16.4" stroke="#d6d6d6" stroke-width="1.8" fill="none"/><g fill="#d6d6d6"><circle cx="32" cy="1.9" r="1.8"/><circle cx="32" cy="7.3" r="1.8"/><circle cx="32" cy="12.8" r="1.8"/></g></svg><svg style="left:1097px;top:394px" width="40" height="15" viewBox="0 0 40 15"><path d="M0 4.5H16.4M0 9.3H16.4" stroke="#d6d6d6" stroke-width="1.8" fill="none"/><g fill="#d6d6d6"><circle cx="32" cy="1.9" r="1.8"/><circle cx="32" cy="7.3" r="1.8"/><circle cx="32" cy="12.8" r="1.8"/></g></svg><svg style="left:1480.3px;top:394px" width="40" height="15" viewBox="0 0 40 15"><path d="M0 4.5H16.4M0 9.3H16.4" stroke="#d6d6d6" stroke-width="1.8" fill="none"/><g fill="#d6d6d6"><circle cx="32" cy="1.9" r="1.8"/><circle cx="32" cy="7.3" r="1.8"/><circle cx="32" cy="12.8" r="1.8"/></g></svg><svg style="left:1735.8px;top:394px" width="40" height="15" viewBox="0 0 40 15"><path d="M0 4.5H16.4M0 9.3H16.4" stroke="#d6d6d6" stroke-width="1.8" fill="none"/><g fill="#d6d6d6"><circle cx="32" cy="1.9" r="1.8"/><circle cx="32" cy="7.3" r="1.8"/><circle cx="32" cy="12.8" r="1.8"/></g></svg><div class="t" style="left:393.12px;top:423px;font-size:16px;color:#a6a6a6;letter-spacing:0.137px;">Filter by template name</div><div class="t" style="left:776.32px;top:423px;font-size:16px;color:#a6a6a6;letter-spacing:0.102px;">Filter by space name</div><div class="t" style="left:1159.22px;top:423px;font-size:16px;color:#a6a6a6;letter-spacing:0.129px;">Filter by space key</div><svg style="left:738px;top:424.8px" width="12" height="12" viewBox="0 0 12 12"><path d="M0.5 0.5L11.5 11.5M11.5 0.5L0.5 11.5" stroke="#969696" stroke-width="1.4" fill="none"/></svg><svg style="left:1121px;top:424.8px" width="12" height="12" viewBox="0 0 12 12"><path d="M0.5 0.5L11.5 11.5M11.5 0.5L0.5 11.5" stroke="#969696" stroke-width="1.4" fill="none"/></svg><svg style="left:1505px;top:424.8px" width="12" height="12" viewBox="0 0 12 12"><path d="M0.5 0.5L11.5 11.5M11.5 0.5L0.5 11.5" stroke="#969696" stroke-width="1.4" fill="none"/></svg><div class="ul" style="left:393px;width:367px"></div><div class="ul" style="left:776px;width:367px"></div><div class="ul" style="left:1159px;width:368px"></div><div class="ul" style="left:1545px;width:235px"></div><div class="a" style="left:1545px;top:415px;width:136px;height:31px;border-radius:15.5px;background:#ebebeb"></div><div class="lz" style="left:1556.5px;width:112.5px;top:424px"></div><div class="t" style="left:1560.28px;top:427px;font-size:10.6px;color:#a54800;font-weight:700;letter-spacing:0.023px;">GLOBAL TEMPLATE</div><div class="t" style="left:1684.92px;top:424px;font-size:16px;color:#a6a6a6;letter-spacing:0.018px;">Fil…</div><svg style="left:1763px;top:430px" width="10" height="5" viewBox="0 0 10 5"><path d="M0 0H10L5 5Z" fill="#757575"/></svg><div class="a" style="left:1790px;top:383px;width:15px;height:542px;background:#fbfbfb"></div><svg style="left:1793px;top:389.5px" width="9" height="5" viewBox="0 0 9 5"><path d="M0 5L4.5 0L9 5Z" fill="#8b8b8b"/></svg><div class="a" style="left:1793px;top:742.7px;width:9px;height:113px;border-radius:4.5px;background:#8b8b8b"></div><svg style="left:1793px;top:913px" width="9" height="5" viewBox="0 0 9 5"><path d="M0 0L4.5 5L9 0Z" fill="#8b8b8b"/></svg><div class="a" style="left:270px;top:925px;width:1535px;height:15px;background:#fbfbfb"></div><div class="a" style="left:270px;top:940px;width:1535px;height:1px;background:#dde0e5"></div><svg style="left:274.8px;top:928px" width="5.4" height="9" viewBox="0 0 5.4 9"><path d="M5.4 0L0 4.5L5.4 9Z" fill="#8b8b8b"/></svg><div class="a" style="left:288px;top:928.2px;width:1482.2px;height:8.7px;border-radius:4.4px;background:#8b8b8b"></div><svg style="left:1779px;top:928px" width="5.4" height="9" viewBox="0 0 5.4 9"><path d="M0 0L5.4 4.5L0 9Z" fill="#8b8b8b"/></svg><div class="t" style="left:270.46px;top:957px;font-size:14px;color:#1c2128;font-weight:700;letter-spacing:-0.153px;">Total selected: 1</div><div class="a" style="left:958px;top:949px;width:86px;height:32px;border-radius:3px;background:#f4f5f7"></div><svg style="left:978px;top:960px" width="8" height="10" viewBox="0 0 8 10"><path d="M6.2 1.2L2.2 5L6.2 8.8" fill="none" stroke="#344563" stroke-width="2"/></svg><div class="t" style="left:997.68px;top:958px;font-size:14px;color:#344563;letter-spacing:-0.643px;">Back</div><div class="a" style="left:1048px;top:949px;width:63px;height:32px;border-radius:3px;background:#0052cc"></div><div class="t" style="left:1064.38px;top:958px;font-size:14px;color:#fff;letter-spacing:0.437px;">Next</div><svg style="left:1706px;top:960px" width="8" height="10" viewBox="0 0 8 10"><path d="M6.6 0.6L1.6 5L6.6 9.4" fill="none" stroke="#b3b3b3" stroke-width="1.6"/></svg><div class="a" style="left:1732px;top:949px;width:32px;height:32px;border-radius:3px;background:#ebecee"></div><div class="t" style="left:1744.15px;top:958px;font-size:14px;color:#1c2b41;">1</div><svg style="left:1782px;top:960px" width="8" height="10" viewBox="0 0 8 10"><path d="M1.4 0.6L6.4 5L1.4 9.4" fill="none" stroke="#1d1d1d" stroke-width="1.9"/></svg>
</body>
</html>
